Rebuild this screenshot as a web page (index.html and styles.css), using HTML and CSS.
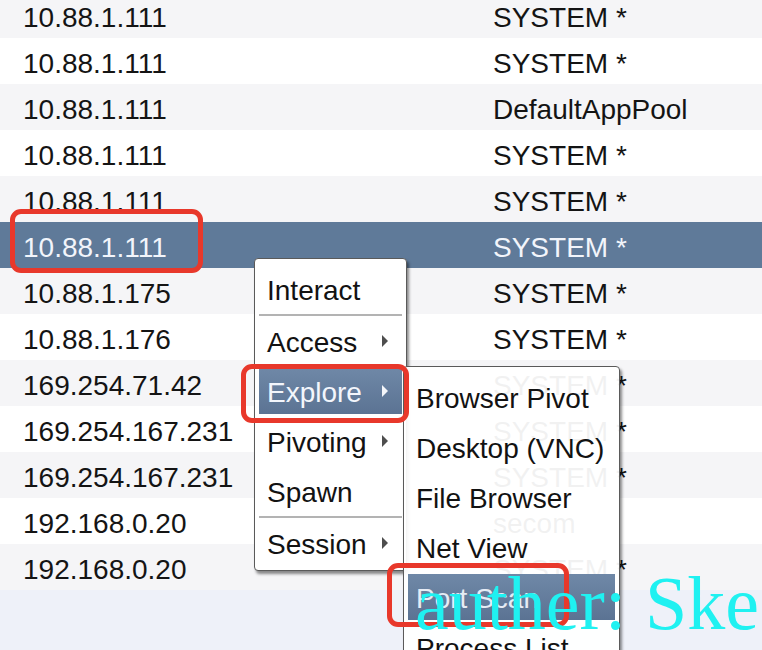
FILE: index.html
```html
<!DOCTYPE html>
<html>
<head>
<meta charset="utf-8">
<link rel="stylesheet" href="styles.css">
</head>
<body>
<div class="screen">
  <div class="table">
    <div class="row"><span class="ip">10.88.1.111</span><span class="user">SYSTEM *</span></div>
    <div class="row"><span class="ip">10.88.1.111</span><span class="user">SYSTEM *</span></div>
    <div class="row"><span class="ip">10.88.1.111</span><span class="user">DefaultAppPool</span></div>
    <div class="row"><span class="ip">10.88.1.111</span><span class="user">SYSTEM *</span></div>
    <div class="row"><span class="ip">10.88.1.111</span><span class="user">SYSTEM *</span></div>
    <div class="row selected"><span class="ip">10.88.1.111</span><span class="user">SYSTEM *</span></div>
    <div class="row"><span class="ip">10.88.1.175</span><span class="user">SYSTEM *</span></div>
    <div class="row"><span class="ip">10.88.1.176</span><span class="user">SYSTEM *</span></div>
    <div class="row"><span class="ip">169.254.71.42</span><span class="user">SYSTEM *</span></div>
    <div class="row"><span class="ip">169.254.167.231</span><span class="user">SYSTEM *</span></div>
    <div class="row"><span class="ip">169.254.167.231</span><span class="user">SYSTEM *</span></div>
    <div class="row"><span class="ip">192.168.0.20</span><span class="user">secom</span></div>
    <div class="row"><span class="ip">192.168.0.20</span><span class="user">SYSTEM *</span></div>
  </div>

  <div class="menu main-menu">
    <div class="item">Interact</div>
    <div class="sep"></div>
    <div class="item sub">Access<span class="arrow"></span></div>
    <div class="item sub active">Explore<span class="arrow"></span></div>
    <div class="item sub">Pivoting<span class="arrow"></span></div>
    <div class="item">Spawn</div>
    <div class="sep"></div>
    <div class="item sub">Session<span class="arrow"></span></div>
  </div>

  <div class="menu sub-menu">
    <div class="item">Browser Pivot</div>
    <div class="item">Desktop (VNC)</div>
    <div class="item">File Browser</div>
    <div class="item">Net View</div>
    <div class="item active">Port Scan</div>
    <div class="item">Process List</div>
  </div>

  <div class="mark mark-ip"></div>
  <div class="mark mark-explore"></div>
  <div class="mark mark-scan"></div>

  <div class="watermark">auther: Ske</div>
</div>
</body>
</html>
```

FILE: styles.css
```css
html, body {
  margin: 0;
  padding: 0;
}

body {
  width: 762px;
  height: 650px;
  overflow: hidden;
  background: #eef1f9;
  font-family: "Liberation Sans", Arial, sans-serif;
}

.screen {
  position: relative;
  width: 762px;
  height: 650px;
  overflow: hidden;
}

.table {
  margin-top: -8px;
  display: flex;
  flex-direction: column;
}

.row {
  display: flex;
  height: 46px;
  box-sizing: border-box;
  padding-top: 6px;
  line-height: 40px;
  font-size: 28px;
  color: #141414;
  background: #ffffff;
  white-space: nowrap;
}

.row:nth-child(odd) {
  background: #f5f5f7;
}

.row.selected {
  background: #5f7a99;
  color: #f2f5fb;
}

.ip {
  width: 470px;
  padding-left: 23px;
  flex: none;
}

.user {
  flex: none;
}

.menu {
  position: absolute;
  display: flex;
  flex-direction: column;
  box-sizing: border-box;
  border: 1px solid #5a5a5a;
  border-radius: 4px;
  padding: 5px 0 2px;
  box-shadow: 2px 3px 3px rgba(0, 0, 0, 0.45);
  font-size: 28px;
  color: #121212;
}

.main-menu {
  left: 254px;
  top: 258px;
  width: 153px;
  background: #ffffff;
}

.sub-menu {
  left: 403px;
  top: 366px;
  width: 217px;
  height: 300px;
  background: rgba(255, 255, 255, 0.94);
}

.item {
  display: flex;
  align-items: center;
  justify-content: space-between;
  flex: none;
  box-sizing: border-box;
  height: 46px;
  margin: 2px 4px;
  padding: 4px 14px 0 8px;
  line-height: 42px;
  white-space: nowrap;
}

.item.active {
  background: linear-gradient(#6f88a7, #5b7393);
  color: #f3f6fc;
}

.sub-menu .item.active {
  color: #e6ecf5;
}

.arrow {
  width: 0;
  height: 0;
  border-left: 6px solid #4e4e4e;
  border-top: 6px solid transparent;
  border-bottom: 6px solid transparent;
  margin-top: -4px;
}

.item.active .arrow {
  border-left-color: #f4f6fa;
}

.sep {
  flex: none;
  height: 2px;
  margin: 0 4px;
  background: #b3b3b3;
}

.mark {
  position: absolute;
  box-sizing: border-box;
  border: 5px solid #e8382b;
  border-radius: 11px;
}

.mark-ip {
  left: 10px;
  top: 209px;
  width: 193px;
  height: 64px;
}

.mark-explore {
  left: 241px;
  top: 364px;
  width: 168px;
  height: 59px;
}

.mark-scan {
  left: 387px;
  top: 563px;
  width: 182px;
  height: 64px;
}

.watermark {
  position: absolute;
  left: 415px;
  top: 565px;
  font-family: "Liberation Serif", "Times New Roman", serif;
  font-size: 76px;
  line-height: 76px;
  color: #1ff1f1;
  white-space: nowrap;
}
```
